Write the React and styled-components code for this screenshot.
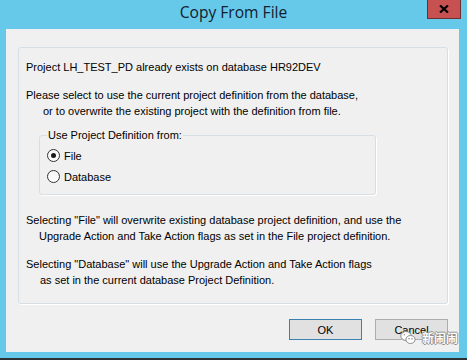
import React from "react";
import styled, { createGlobalStyle } from "styled-components";

const Global = createGlobalStyle`
  html, body { margin: 0; padding: 0; }
  body { width: 467px; height: 360px; overflow: hidden; background: #67c9ea; }
`;

const Window = styled.div`
  position: relative;
  width: 467px;
  height: 360px;
  box-sizing: border-box;
  background: #67c9ea;
  border-bottom: 2px solid #2b3135;
  display: flex;
  flex-direction: column;
  font-family: "Liberation Sans", Arial, sans-serif;
`;

const TitleBar = styled.div`
  height: 29px;
  flex: none;
  display: grid;
  grid-template-columns: 1fr auto 1fr;
  align-items: start;
`;

const Title = styled.div`
  grid-column: 2;
  padding-top: 2px;
  font-family: "Open Sans", "Noto Sans", sans-serif;
  font-size: 15.6px;
  line-height: 21px;
  color: #10202e;
`;

const CloseButton = styled.div`
  grid-column: 3;
  justify-self: end;
  margin-right: 6px;
  width: 34px;
  height: 19px;
  box-sizing: border-box;
  background: #c75050;
  border: 1px solid #6d3030;
  border-top: none;
  display: flex;
  align-items: center;
  justify-content: center;
`;

const Client = styled.div`
  flex: 1;
  margin: 0 8px 6px 6px;
  background: #f0f0f0;
  padding: 18px 11px 12px 12px;
  display: flex;
  flex-direction: column;
`;

const OuterGroup = styled.div`
  border: 1px solid #d5dfe5;
  border-radius: 3px;
  box-shadow: 1px 1px 0 #ffffff;
  padding: 11px 8px 15px 7px;
`;

const Para = styled.div`
  margin-top: ${(p) => p.$mt || 0}px;
`;

const Line = styled.div`
  font-size: 11px;
  line-height: 16px;
  color: #000;
  white-space: nowrap;
  padding-left: ${(p) => p.$indent || 0}px;
`;

const GroupBox = styled.fieldset`
  margin: 8px 0 0 13px;
  width: 337px;
  min-width: 0;
  box-sizing: border-box;
  border: 1px solid #d5dfe5;
  border-radius: 3px;
  box-shadow: 1px 1px 0 #ffffff;
  padding: 2px 7px 7px 7px;
`;

const Legend = styled.legend`
  padding: 0 1px;
  font-size: 11px;
  line-height: 16px;
  color: #000;
`;

const RadioRow = styled.label`
  display: flex;
  align-items: center;
  height: 21px;
  gap: 4px;
  font-size: 11px;
  line-height: 16px;
  color: #000;
`;

const RadioCircle = styled.span`
  width: 13px;
  height: 13px;
  box-sizing: border-box;
  border-radius: 50%;
  border: 1px solid #333333;
  background: linear-gradient(#f6f6f6, #ffffff);
  display: flex;
  align-items: center;
  justify-content: center;
  &::after {
    content: "";
    width: 5px;
    height: 5px;
    border-radius: 50%;
    background: ${(p) => (p.$checked ? "#1a1a1a" : "transparent")};
  }
`;

const ButtonRow = styled.div`
  margin-top: 15px;
  display: flex;
  justify-content: flex-end;
  gap: 13px;
`;

const Button = styled.div`
  width: 73px;
  height: 21px;
  box-sizing: border-box;
  background: #e1e1e1;
  border: 1px solid ${(p) => (p.$default ? "#3c7fb1" : "#adadad")};
  display: flex;
  align-items: center;
  justify-content: center;
  font-size: 11px;
  color: #000;
`;

const Watermark = styled.div`
  position: absolute;
  right: 9px;
  bottom: 13px;
  display: flex;
  align-items: center;
  gap: 6px;
  opacity: 0.95;
`;

const WatermarkText = styled.span`
  font-family: "Noto Sans CJK SC", sans-serif;
  font-weight: 700;
  font-size: 12px;
  line-height: 14px;
  color: #ffffff;
  text-shadow: -1px 0 #8a8a8a, 1px 0 #8a8a8a, 0 -1px #8a8a8a, 0 1px #8a8a8a;
`;

function WeChatIcon() {
  return (
    <svg width="16" height="15" viewBox="0 0 16 15">
      <ellipse cx="6" cy="6" rx="5.2" ry="4.5" fill="#fff" stroke="#8a8a8a" strokeWidth="1" />
      <ellipse cx="10.5" cy="9.5" rx="4.6" ry="4" fill="#fff" stroke="#8a8a8a" strokeWidth="1" />
      <circle cx="9" cy="8.8" r="0.8" fill="#8a8a8a" />
      <circle cx="12" cy="8.8" r="0.8" fill="#8a8a8a" />
      <circle cx="4.3" cy="4.8" r="0.7" fill="#8a8a8a" />
    </svg>
  );
}

export default function App() {
  return (
    <>
      <Global />
      <Window>
        <TitleBar>
          <Title>Copy From File</Title>
          <CloseButton>
            <svg width="10" height="8" viewBox="0 0 10 8">
              <path d="M1 0.5 L9 7.5 M9 0.5 L1 7.5" stroke="#000" strokeWidth="2.2" />
            </svg>
          </CloseButton>
        </TitleBar>
        <Client>
          <OuterGroup>
            <Para>
              <Line>Project LH_TEST_PD already exists on database HR92DEV</Line>
            </Para>
            <Para $mt={12}>
              <Line>Please select to use the current project definition from the database,</Line>
              <Line $indent={17}>or to overwrite the existing project with the definition from file.</Line>
            </Para>
            <GroupBox>
              <Legend>Use Project Definition from:</Legend>
              <RadioRow>
                <RadioCircle $checked />
                File
              </RadioRow>
              <RadioRow>
                <RadioCircle />
                Database
              </RadioRow>
            </GroupBox>
            <Para $mt={17}>
              <Line>Selecting "File" will overwrite existing database project definition, and use the</Line>
              <Line $indent={13}>Upgrade Action and Take Action flags as set in the File project definition.</Line>
            </Para>
            <Para $mt={12}>
              <Line>Selecting "Database" will use the Upgrade Action and Take Action flags</Line>
              <Line $indent={14}>as set in the current database Project Definition.</Line>
            </Para>
          </OuterGroup>
          <ButtonRow>
            <Button $default>OK</Button>
            <Button>Cancel</Button>
          </ButtonRow>
        </Client>
        <Watermark>
          <WeChatIcon />
          <WatermarkText>新闹闹</WatermarkText>
        </Watermark>
      </Window>
    </>
  );
}
